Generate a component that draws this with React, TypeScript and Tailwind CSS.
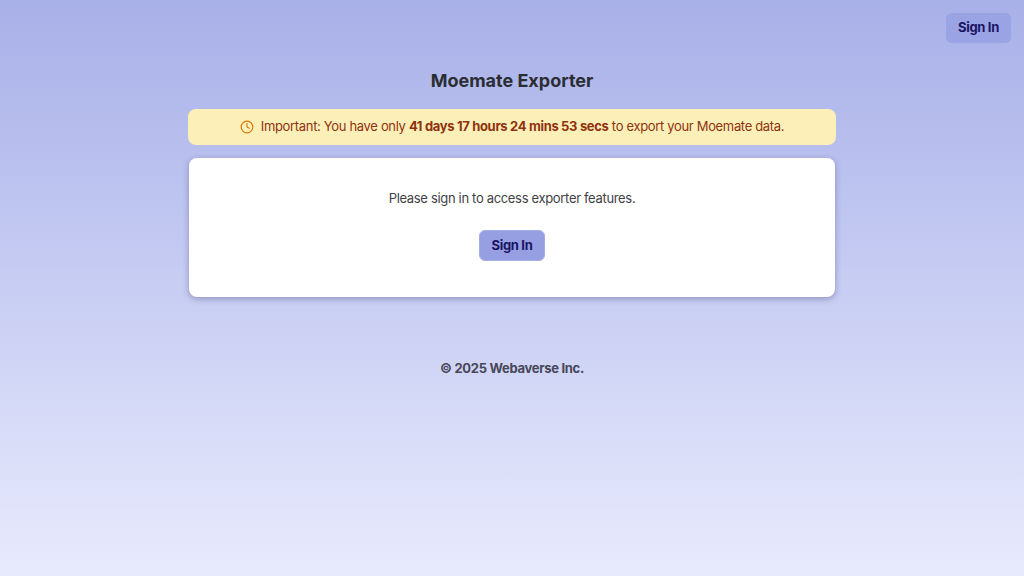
import { Clock } from 'lucide-react'

export default function App() {
  return (
    <div className="relative h-[576px] overflow-hidden bg-gradient-to-b from-[#a8b0e8] to-[#e8ebfd] font-['Inter',sans-serif]">
      <button className="absolute top-[13px] right-[13px] w-[65px] h-[30px] rounded-md bg-[#9aa3e3] text-[13px] tracking-[-0.3px] font-bold text-[#1a1464]">
        Sign In
      </button>

      <main className="mx-auto w-[648px] pt-[68px] flex flex-col">
        <h1 className="text-center text-[18px] leading-[26px] font-bold text-[#2b2d33]">Moemate Exporter</h1>

        <div className="mt-[15px] h-[36px] flex items-center justify-center gap-[7px] rounded-lg bg-[#fcf0b8] text-[13px] tracking-[-0.33px] text-[#8f3210]">
          <Clock className="w-[14px] h-[14px] text-[#d97706]" />
          <span>
            Important: You have only <strong className="font-bold">41 days 17 hours 24 mins 53 secs</strong> to export your Moemate data.
          </span>
        </div>

        <div className="mt-[13px] mx-px h-[139px] rounded-lg bg-white shadow-[0_2px_6px_rgba(60,60,110,0.4)] flex flex-col items-center pt-[31px]">
          <p className="text-[13px] tracking-[-0.33px] leading-[18px] text-[#3f3f46]">Please sign in to access exporter features.</p>
          <button className="mt-[23px] w-[66px] h-[31px] rounded-md bg-[#969fe2] border border-[#a5ade8] text-[13px] tracking-[-0.3px] font-bold text-[#1a1464]">
            Sign In
          </button>
        </div>

        <p className="mt-[62px] text-center text-[13px] tracking-[-0.3px] leading-[18px] font-bold text-[#474759]">© 2025 Webaverse Inc.</p>
      </main>
    </div>
  )
}
